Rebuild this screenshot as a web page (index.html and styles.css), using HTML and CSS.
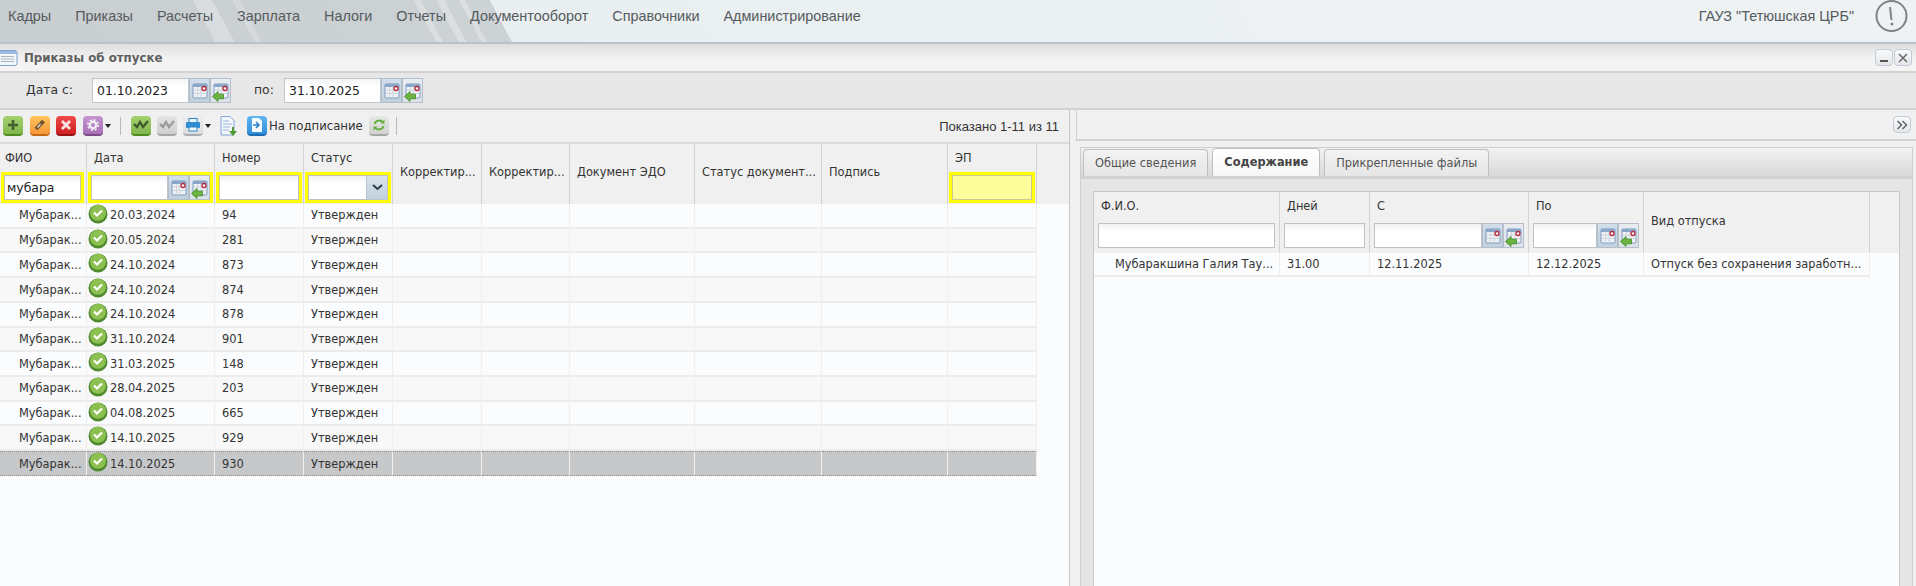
FILE: index.html
```html
<!DOCTYPE html>
<html lang="ru">
<head>
<meta charset="utf-8">
<title>Приказы об отпуске</title>
<link rel="stylesheet" href="styles.css">
</head>
<body>
<svg class="defs" width="0" height="0">
  <defs>
    <symbol id="cal" viewBox="0 0 16 16">
      <rect x="1" y="1" width="14" height="14" rx="1" fill="#eef1f5" stroke="#7f9bbd"/>
      <rect x="1" y="1" width="14" height="3" fill="#8aa6c8"/>
      <path d="M2 7h12M2 10.500h12M5.500 4v11M9 4v11" stroke="#d0d5dc" stroke-width="1" fill="none"/>
      <circle cx="12" cy="5.500" r="2" fill="#fff" stroke="#b5273a" stroke-width="1.300"/>
    </symbol>
    <symbol id="arrow" viewBox="0 0 12 11">
      <path d="M0.500 5.500L6 0.500V3.200H11.500V7.800H6V10.500Z" fill="#6cb33f" stroke="#3f8a25" stroke-width="0.800"/>
    </symbol>
    <symbol id="ok" viewBox="0 0 20 20">
      <circle cx="10" cy="10" r="9.500" fill="#4e8a2e"/>
      <circle cx="10" cy="8.800" r="8" fill="#8cc152"/>
      <path d="M6 8.500l3 3 5-5" fill="none" stroke="#fff" stroke-width="2.200"/>
    </symbol>
  </defs>
</svg>
<div class="app">
  <header class="topbar">
    <nav class="menu">
      <span>Кадры</span><span>Приказы</span><span>Расчеты</span><span>Зарплата</span><span>Налоги</span><span>Отчеты</span><span>Документооборот</span><span>Справочники</span><span>Администрирование</span>
    </nav>
    <div class="org">ГАУЗ "Тетюшская ЦРБ"</div>
    <svg class="alert" width="33" height="33" viewBox="0 0 33 33">
      <circle cx="16.500" cy="16" r="15" fill="none" stroke="#7d8486" stroke-width="2"/>
      <path d="M15 7l1.500 13" stroke="#7d8486" stroke-width="2" fill="none"/>
      <circle cx="17" cy="24" r="1.500" fill="#7d8486"/>
    </svg>
  </header>

  <div class="titlebar">
    <svg class="winicon" width="18" height="16" viewBox="0 0 18 16">
      <rect x="-2" y="0.500" width="19" height="15" rx="2" fill="#f3f6fa" stroke="#7fa0cf"/>
      <rect x="-2" y="1" width="19" height="3" fill="#9db9e0"/>
      <path d="M1 6.500h13M1 9h13M1 11.500h13" stroke="#aab4c2"/>
    </svg>
    <div class="wintitle">Приказы об отпуске</div>
    <button class="winbtn"><svg width="10" height="10" viewBox="0 0 10 10"><path d="M1 8h8" stroke="#555" stroke-width="2"/></svg></button>
    <button class="winbtn"><svg width="10" height="10" viewBox="0 0 10 10"><path d="M1 1l8 8M9 1l-8 8" stroke="#666" stroke-width="1.500"/></svg></button>
  </div>

  <div class="datebar">
    <span class="dlabel">Дата с:</span>
    <div class="dfield"><span>01.10.2023</span></div>
    <div class="calbtn on"><svg width="16" height="16"><use href="#cal"/></svg></div>
    <div class="calbtn back"><svg width="16" height="16"><use href="#cal"/></svg><svg class="backarrow" width="12" height="11"><use href="#arrow"/></svg></div>
    <span class="dlabel to">по:</span>
    <div class="dfield"><span>31.10.2025</span></div>
    <div class="calbtn on"><svg width="16" height="16"><use href="#cal"/></svg></div>
    <div class="calbtn back"><svg width="16" height="16"><use href="#cal"/></svg><svg class="backarrow" width="12" height="11"><use href="#arrow"/></svg></div>
  </div>

  <main class="main">
    <section class="left">
      <div class="toolbar">
        <button class="tb green"><svg width="14" height="14" viewBox="0 0 14 14"><path d="M7 2v10M2 7h10" stroke="#45602f" stroke-width="2.600"/></svg></button>
        <button class="tb orange"><svg width="14" height="14" viewBox="0 0 14 14"><path d="M3 11l7.500-8" stroke="#6d5335" stroke-width="4"/><path d="M4.500 9.500l3-3.200" stroke="#e8d9c3" stroke-width="1.500"/></svg></button>
        <button class="tb red"><svg width="14" height="14" viewBox="0 0 14 14"><path d="M3 3l8 8M11 3l-8 8" stroke="#f7e3e3" stroke-width="2.800"/></svg></button>
        <button class="tb purple"><svg width="14" height="14" viewBox="0 0 14 14"><circle cx="7" cy="7" r="3.200" fill="none" stroke="#f3ecf5" stroke-width="2.400"/><circle cx="7" cy="7" r="5.200" fill="none" stroke="#f3ecf5" stroke-width="1.600" stroke-dasharray="2 2.080"/></svg></button>
        <span class="caret"></span>
        <span class="sep"></span>
        <button class="tb green"><svg width="16" height="14" viewBox="0 0 16 14"><path d="M1 6l3 3 3-5 3 5 5-6" fill="none" stroke="#3f5a2c" stroke-width="2.400"/></svg></button>
        <button class="tb grey"><svg width="16" height="14" viewBox="0 0 16 14"><path d="M1 6l3 3 3-5 3 5 5-6" fill="none" stroke="#9b9b9b" stroke-width="2.400"/></svg></button>
        <button class="tb light"><svg width="16" height="14" viewBox="0 0 16 14"><rect x="4" y="0.500" width="8" height="4" fill="#eaf3fb" stroke="#2f86c4"/><rect x="1" y="4" width="14" height="6" rx="1" fill="#2f8ed2"/><rect x="4" y="9" width="8" height="4" fill="#f3f8fc" stroke="#2f86c4"/></svg></button>
        <span class="caret"></span>
        <svg class="docicon" width="19" height="21" viewBox="0 0 19 21"><path d="M1 .5h9l4 4V19H1z" fill="#f2f7fd" stroke="#7ea6d8"/><path d="M3 5h6M3 8h9M3 11h7M3 14h6" stroke="#9db8da"/><path d="M14 11v4h3l-4 5-4-5h3v-4z" fill="#4c9c32"/></svg>
        <button class="tb blue"><svg width="14" height="16" viewBox="0 0 14 16"><path d="M2 1h7l3 3v11H2z" fill="#f6fbff"/><path d="M3 8h5M6 5l3 3-3 3" fill="none" stroke="#2c7fc7" stroke-width="1.600"/></svg></button>
        <span class="tbtext">На подписание</span>
        <button class="tb silver"><svg width="14" height="14" viewBox="0 0 14 14"><path d="M2.500 6a4.800 4.800 0 0 1 8.500-1.500M11.500 8a4.800 4.800 0 0 1-8.500 1.500" fill="none" stroke="#5fae3a" stroke-width="1.800"/><path d="M12.500 1.500v4h-4zM1.500 12.500v-4h4z" fill="#5fae3a"/></svg></button>
        <span class="sep last"></span>
        <span class="shown">Показано 1-11 из 11</span>
      </div>

      <div class="ghead lcols">
        <div class="hc first"><div class="hl">ФИО</div><div class="yf"><div class="fi txt">мубара</div></div></div>
        <div class="hc"><div class="hl">Дата</div><div class="yf"><div class="fi"></div><div class="calbtn on fb"><svg width="16" height="16"><use href="#cal"/></svg></div><div class="calbtn back fb"><svg width="16" height="16"><use href="#cal"/></svg><svg class="backarrow" width="12" height="11"><use href="#arrow"/></svg></div></div></div>
        <div class="hc"><div class="hl">Номер</div><div class="yf"><div class="fi"></div></div></div>
        <div class="hc"><div class="hl">Статус</div><div class="yf"><div class="fi"></div><div class="combo"><svg width="11" height="7" viewBox="0 0 11 7"><path d="M1 1l4.500 4L10 1" fill="none" stroke="#333c44" stroke-width="2"/></svg></div></div></div>
        <div class="hc mid">Корректир...</div>
        <div class="hc mid">Корректир...</div>
        <div class="hc mid">Документ ЭДО</div>
        <div class="hc mid">Статус документ...</div>
        <div class="hc mid">Подпись</div>
        <div class="hc"><div class="hl">ЭП</div><div class="yf dis"><div class="fi"></div></div></div>
        <div class="hc end"></div>
      </div>

      <div class="grows">
        <div class="gr lrow"><div class="c nm">Мубарак...</div><div class="c dt"><svg width="20" height="20"><use href="#ok"/></svg><span>20.03.2024</span></div><div class="c">94</div><div class="c">Утвержден</div><div class="c"></div><div class="c"></div><div class="c"></div><div class="c"></div><div class="c"></div><div class="c"></div></div>
        <div class="gr lrow alt"><div class="c nm">Мубарак...</div><div class="c dt"><svg width="20" height="20"><use href="#ok"/></svg><span>20.05.2024</span></div><div class="c">281</div><div class="c">Утвержден</div><div class="c"></div><div class="c"></div><div class="c"></div><div class="c"></div><div class="c"></div><div class="c"></div></div>
        <div class="gr lrow"><div class="c nm">Мубарак...</div><div class="c dt"><svg width="20" height="20"><use href="#ok"/></svg><span>24.10.2024</span></div><div class="c">873</div><div class="c">Утвержден</div><div class="c"></div><div class="c"></div><div class="c"></div><div class="c"></div><div class="c"></div><div class="c"></div></div>
        <div class="gr lrow alt"><div class="c nm">Мубарак...</div><div class="c dt"><svg width="20" height="20"><use href="#ok"/></svg><span>24.10.2024</span></div><div class="c">874</div><div class="c">Утвержден</div><div class="c"></div><div class="c"></div><div class="c"></div><div class="c"></div><div class="c"></div><div class="c"></div></div>
        <div class="gr lrow"><div class="c nm">Мубарак...</div><div class="c dt"><svg width="20" height="20"><use href="#ok"/></svg><span>24.10.2024</span></div><div class="c">878</div><div class="c">Утвержден</div><div class="c"></div><div class="c"></div><div class="c"></div><div class="c"></div><div class="c"></div><div class="c"></div></div>
        <div class="gr lrow alt"><div class="c nm">Мубарак...</div><div class="c dt"><svg width="20" height="20"><use href="#ok"/></svg><span>31.10.2024</span></div><div class="c">901</div><div class="c">Утвержден</div><div class="c"></div><div class="c"></div><div class="c"></div><div class="c"></div><div class="c"></div><div class="c"></div></div>
        <div class="gr lrow"><div class="c nm">Мубарак...</div><div class="c dt"><svg width="20" height="20"><use href="#ok"/></svg><span>31.03.2025</span></div><div class="c">148</div><div class="c">Утвержден</div><div class="c"></div><div class="c"></div><div class="c"></div><div class="c"></div><div class="c"></div><div class="c"></div></div>
        <div class="gr lrow alt"><div class="c nm">Мубарак...</div><div class="c dt"><svg width="20" height="20"><use href="#ok"/></svg><span>28.04.2025</span></div><div class="c">203</div><div class="c">Утвержден</div><div class="c"></div><div class="c"></div><div class="c"></div><div class="c"></div><div class="c"></div><div class="c"></div></div>
        <div class="gr lrow"><div class="c nm">Мубарак...</div><div class="c dt"><svg width="20" height="20"><use href="#ok"/></svg><span>04.08.2025</span></div><div class="c">665</div><div class="c">Утвержден</div><div class="c"></div><div class="c"></div><div class="c"></div><div class="c"></div><div class="c"></div><div class="c"></div></div>
        <div class="gr lrow alt"><div class="c nm">Мубарак...</div><div class="c dt"><svg width="20" height="20"><use href="#ok"/></svg><span>14.10.2025</span></div><div class="c">929</div><div class="c">Утвержден</div><div class="c"></div><div class="c"></div><div class="c"></div><div class="c"></div><div class="c"></div><div class="c"></div></div>
        <div class="gr lrow sel"><div class="c nm">Мубарак...</div><div class="c dt"><svg width="20" height="20"><use href="#ok"/></svg><span>14.10.2025</span></div><div class="c">930</div><div class="c">Утвержден</div><div class="c"></div><div class="c"></div><div class="c"></div><div class="c"></div><div class="c"></div><div class="c"></div></div>
      </div>
    </section>

    <div class="split"></div>

    <section class="right">
      <div class="rtool">
        <button class="winbtn exp"><svg width="12" height="10" viewBox="0 0 12 10"><path d="M1.500 1l4 4-4 4M6.500 1l4 4-4 4" fill="none" stroke="#5b6670" stroke-width="1.500"/></svg></button>
      </div>
      <div class="tabwrap">
        <div class="tabs">
          <div class="tab">Общие сведения</div>
          <div class="tab act">Содержание</div>
          <div class="tab">Прикрепленные файлы</div>
        </div>
        <div class="tabbody">
          <div class="rgrid">
            <div class="ghead rhead rcols">
              <div class="hc"><div class="hl">Ф.И.О.</div><div class="pf"><div class="fi"></div></div></div>
              <div class="hc"><div class="hl">Дней</div><div class="pf"><div class="fi"></div></div></div>
              <div class="hc"><div class="hl">С</div><div class="pf"><div class="fi"></div><div class="calbtn on fb"><svg width="16" height="16"><use href="#cal"/></svg></div><div class="calbtn back fb"><svg width="16" height="16"><use href="#cal"/></svg><svg class="backarrow" width="12" height="11"><use href="#arrow"/></svg></div></div></div>
              <div class="hc"><div class="hl">По</div><div class="pf"><div class="fi"></div><div class="calbtn on fb"><svg width="16" height="16"><use href="#cal"/></svg></div><div class="calbtn back fb"><svg width="16" height="16"><use href="#cal"/></svg><svg class="backarrow" width="12" height="11"><use href="#arrow"/></svg></div></div></div>
              <div class="hc mid">Вид отпуска</div>
              <div class="hc end"></div>
            </div>
            <div class="gr rrow">
              <div class="c nm wide">Мубаракшина Галия Тау...</div>
              <div class="c">31.00</div>
              <div class="c">12.11.2025</div>
              <div class="c">12.12.2025</div>
              <div class="c">Отпуск без сохранения заработн...</div>
            </div>
          </div>
        </div>
      </div>
    </section>
  </main>
</div>
</body>
</html>
```
FILE: styles.css
```css
* { box-sizing: border-box; }
html, body { margin: 0; padding: 0; height: 100%; overflow: hidden; }
body { font-family: "DejaVu Sans", sans-serif; font-size: 11.4px; color: #333; background: #fbfcfe; }
button { padding: 0; margin: 0; font: inherit; }
.defs { position: absolute; }
.app { display: flex; flex-direction: column; height: 586px; }

.topbar {
  flex: 0 0 44px; display: flex; align-items: flex-start; padding-left: 8px;
  border-bottom: 2px solid #b7c2ca;
  font-family: "Liberation Sans", sans-serif; font-size: 14.4px; color: #555a5e;
  background:
    linear-gradient(62deg,
      transparent 190px, rgba(255,255,255,.28) 190px, rgba(255,255,255,.28) 207px, transparent 207px,
      transparent 225px, rgba(255,255,255,.2) 225px, rgba(255,255,255,.2) 231px, transparent 231px,
      transparent 385px, rgba(255,255,255,.28) 385px, rgba(255,255,255,.28) 391px, transparent 391px,
      transparent 405px, rgba(255,255,255,.28) 405px, rgba(255,255,255,.28) 412px, transparent 412px,
      transparent 425px, rgba(255,255,255,.28) 425px, rgba(255,255,255,.28) 430px, transparent 430px),
    linear-gradient(62deg, #c9ced0 0, #cdd2d4 452px, #e9eff0 452px, #eef2f3 100%);
}
.menu { display: flex; gap: 24px; flex: 1; line-height: 33px; white-space: nowrap; }
.org { line-height: 33px; margin-right: 21px; }
.alert { margin-right: 8px; }

.titlebar {
  flex: 0 0 29px; display: flex; align-items: center; gap: 1px; padding: 0 4px 0 0;
  background: linear-gradient(#dedede, #f3f3f3 55%, #f4f4f4);
  border-bottom: 2px solid #d2d2d2;
}
.winicon { flex: none; }
.wintitle { flex: 1; margin-left: 5px; font-weight: bold; font-size: 11.8px; color: #5f5f5f; }
.winbtn {
  width: 18px; height: 17px; display: flex; align-items: center; justify-content: center;
  border: 1px solid #c3ccd6; border-radius: 4px; background: linear-gradient(#f8f9fa, #e4e6e9);
}

.datebar {
  flex: 0 0 37px; display: flex; align-items: flex-start; padding: 5px 0 0 0;
  background: #e7e7e7; border-bottom: 2px solid #d2d2d2;
}
.dlabel { width: 92px; padding-left: 26px; line-height: 23px; font-size: 12.4px; color: #333; }
.dlabel.to { width: 53px; padding-left: 23px; }
.dfield {
  width: 97px; height: 25px; padding-left: 4px; line-height: 24px; font-size: 12.4px; color: #222;
  border: 1px solid #bfc6cc; background: linear-gradient(#f0f3f6, #fff 30%);
}
.calbtn {
  position: relative; flex: none; width: 21px; height: 25px;
  display: flex; align-items: center; justify-content: center;
  border: 1px solid #b4bfca; background: linear-gradient(#e9edf2, #dde2e9);
}
.calbtn.on { background: linear-gradient(#d2deea, #bfd0df); }
.backarrow { position: absolute; left: 1px; bottom: 0; }

.main { flex: 1; display: flex; min-height: 0; }
.left { flex: 0 0 1070px; display: flex; flex-direction: column; border-right: 1px solid #c8c8c8; }
.toolbar {
  flex: 0 0 34px; display: flex; align-items: center; gap: 6.5px; padding-left: 3px;
  background: #f0f0f0; border-bottom: 2px solid #dcdcdc;
}
.tb {
  flex: none; width: 20px; height: 20px; display: flex; align-items: center; justify-content: center;
  border: 0; border-radius: 4px; border-bottom: 2px solid;
}
.tb.green { background: linear-gradient(#a6d16d, #7fb64e); border-color: #4f8a1e; }
.tb.orange { background: linear-gradient(#ffc45a, #f6973a); border-color: #c46a14; }
.tb.red { background: linear-gradient(#ef4a4a, #cf2020); border-color: #981313; }
.tb.purple { background: linear-gradient(#c596cf, #a96fb6); border-color: #7d4b89; }
.tb.grey { background: linear-gradient(#e4e4e4, #cfcfcf); border-color: #a5a5a5; }
.tb.light { background: linear-gradient(#eceff1, #d9dde0); border-color: #a7acb0; margin-left: -1px; }
.tb.blue { background: linear-gradient(#64b5f2, #2f8fdc); border-color: #1c6cb3; margin-left: 1px; }
.tb.silver { background: linear-gradient(#e6e8e6, #d2d4d2); border-color: #a6a8a6; margin-left: 0; }
.caret { flex: none; width: 0; height: 0; margin-left: -4.500px; border: 3.500px solid transparent; border-top: 4px solid #222; border-bottom: 0; }
.sep { flex: none; width: 1px; height: 18px; margin: 0 3px; background: #b4bcb8; }
.sep.last { margin-left: 0; }
.docicon { flex: none; margin-left: 3px; }
.tbtext { margin-left: -4px; font-size: 11.7px; white-space: nowrap; color: #333; }
.shown { margin-left: auto; margin-right: 10px; font-family: "Liberation Sans", sans-serif; font-size: 13px; color: #333; }

.ghead { flex: none; display: grid; height: 60px; background: #f0f0f0; }
.lcols { grid-template-columns: 87px 128px 89px 89px 89px 88px 125px 127px 126px 89px 32px; }
.lrow { grid-template-columns: 87px 128px 89px 89px 89px 88px 125px 127px 126px 89px; width: 1037px; }
.rcols { grid-template-columns: 186px 90px 159px 115px 226px 29px; }
.rrow { grid-template-columns: 186px 90px 159px 115px 226px; width: 776px; }

.hc { display: flex; flex-direction: column; min-width: 0; border-right: 1px solid #d2d2d2; }
.hc.end { border-right: 0; }
.hc.mid { justify-content: center; padding: 0 0 4px 7px; white-space: nowrap; }
.hl { height: 28px; line-height: 28px; padding-left: 7px; color: #333; }
.first .hl { padding-left: 5px; }
.yf { display: flex; height: 31px; margin: 0 1px; border: 2px solid #ff0; padding: 1px; background: #ff0; }
.first .yf { margin: 0 2px 0 1px; }
.yf.dis .fi { background: #fdfd9c; border-color: #c9c99a; }
.fi { flex: 1; min-width: 0; height: 100%; padding-left: 2px; border: 1px solid #bfc3c8; background: linear-gradient(#eef1f4, #fff 30%); }
.fi.txt { font-size: 12.4px; line-height: 24px; color: #222; }
.fb { height: 100%; }
.combo { flex: none; width: 21px; display: flex; align-items: center; justify-content: center; border: 1px solid #bfc3c8; border-left: 0; background: linear-gradient(#d9e3ec, #bfd0df); }

.grows { flex: 1; background: #fbfcfe; }
.gr { display: grid; height: 24.73px; }
.alt { background: #f8f8f9; }
.c {
  display: flex; align-items: center; padding-left: 7px; min-width: 0; white-space: nowrap;
  border-right: 1px solid #efefef; border-bottom: 2px solid #ececec; color: #333;
}
.c.nm { padding-left: 19px; }
.c.dt { padding-left: 1px; gap: 2px; }
.c.dt svg { flex: none; margin-top: -3px; }
.sel { background: #c7c8ca; }
.sel .c { border-right-color: #f1f1f1; border-bottom: 1px dotted #8f8f8f; border-top: 1px dotted #8f8f8f; }

.split { flex: 0 0 6px; background: #f0f0f0; }
.right { flex: 1; min-width: 0; display: flex; flex-direction: column; background: #f0f0f0; }
.rtool {
  flex: 0 0 31px; display: flex; align-items: center; justify-content: flex-end; padding-right: 5px;
  background: #f1f1f1; border-left: 1px solid #d2d2d2; border-bottom: 2px solid #d2d2d2;
}
.exp { width: 18px; height: 17px; }
.tabwrap {
  flex: 1; display: flex; flex-direction: column; min-height: 0;
  margin: 6px 3px 0 4px; border: 1px solid #cfcfcf; border-bottom: 0; background: #e5e5e5;
}
.tabs {
  flex: 0 0 31px; display: flex; align-items: flex-end; gap: 4px; padding-left: 2px;
  background: linear-gradient(#f2f2f2, #d9d9d9);
  border-bottom: 3px solid; border-image: linear-gradient(#cfe0ee, #cfe0ee 33%, #d2d2d2 33%) 1;
}
.tab {
  height: 27px; padding: 0 11px; line-height: 26px; white-space: nowrap; color: #555;
  border: 1px solid #bfbfbf; border-bottom: 0; border-radius: 4px 4px 0 0;
  background: linear-gradient(#f3f3f3, #e6e6e6);
}
.tab.act { height: 28px; font-weight: bold; background: linear-gradient(#fff, #f6f6f6); color: #444; }
.tabbody { flex: 1; display: flex; padding: 12px 13px 0 12px; min-height: 0; }
.rgrid { flex: 1; border: 1px solid #c8c8c8; border-bottom: 0; background: #fbfcfe; }
.rhead { height: 61px; }
.pf { display: flex; height: 25px; margin: 3px 4px 0 4px; }
.pf .fb { height: 25px; }
.rrow { height: 24px; }
.c.wide { padding-left: 21px; }
```
